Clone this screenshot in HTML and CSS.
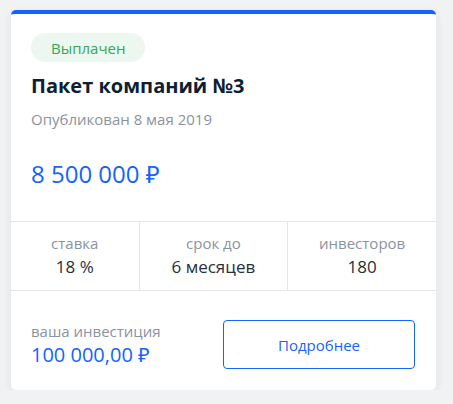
FILE: index.html
```html
<!DOCTYPE html>
<html lang="ru">
<head>
<meta charset="utf-8">
<link rel="stylesheet" href="styles.css">
</head>
<body>
<div class="card">
  <div class="card-top">
    <span class="badge">Выплачен</span>
    <h2 class="title">Пакет компаний №3</h2>
    <div class="date">Опубликован 8 мая 2019</div>
    <div class="amount">8 500 000 ₽</div>
  </div>
  <div class="stats">
    <div class="stat">
      <div class="stat-label">ставка</div>
      <div class="stat-value">18 %</div>
    </div>
    <div class="stat">
      <div class="stat-label">срок до</div>
      <div class="stat-value">6 месяцев</div>
    </div>
    <div class="stat">
      <div class="stat-label">инвесторов</div>
      <div class="stat-value">180</div>
    </div>
  </div>
  <div class="card-bottom">
    <div class="invest">
      <div class="invest-label">ваша инвестиция</div>
      <div class="invest-value">100 000,00 ₽</div>
    </div>
    <button class="more">Подробнее</button>
  </div>
</div>
</body>
</html>
```

FILE: styles.css
```css
* { box-sizing: border-box; }
html, body {
  margin: 0;
  padding: 0;
  background: #f1f2f4;
  font-family: "Open Sans", "Noto Sans", sans-serif;
}
body {
  padding: 10px 17px 0 11px;
}
.card {
  width: 425px;
  height: 380px;
  background: #fff;
  border-top: 4px solid #1463ff;
  border-radius: 5px;
  box-shadow: 0 3px 10px rgba(30, 40, 60, 0.08);
  display: flex;
  flex-direction: column;
}
.card-top {
  padding: 19px 20px 0 20px;
  height: 207px;
  display: flex;
  flex-direction: column;
  align-items: flex-start;
}
.badge {
  display: inline-flex;
  align-items: center;
  height: 29px;
  padding: 0 20px;
  border-radius: 15px;
  background: #ebf7ef;
  color: #35a85a;
  font-size: 15px;
}
.title {
  margin: 11px 0 0 0;
  font-size: 20px;
  line-height: 26px;
  font-weight: 700;
  color: #0e1e33;
}
.date {
  margin-top: 10px;
  font-size: 15px;
  line-height: 20px;
  color: #8a939f;
}
.amount {
  margin-top: 29px;
  font-size: 24px;
  line-height: 32px;
  color: #1463ff;
}
.stats {
  display: grid;
  grid-template-columns: 30% 35% 35%;
  border-top: 1px solid #e3e6ea;
  border-bottom: 1px solid #e3e6ea;
}
.stat {
  padding: 11px 0 11px;
  text-align: center;
  border-left: 1px solid #e3e6ea;
}
.stat:first-child { border-left: none; }
.stat-label {
  font-size: 15px;
  line-height: 20px;
  color: #8a939f;
}
.stat-value {
  margin-top: 2px;
  font-size: 17px;
  line-height: 24px;
  color: #26303d;
}
.card-bottom {
  flex: 1;
  display: flex;
  align-items: center;
  justify-content: space-between;
  padding: 8px 21px 0 20px;
}
.invest-label {
  font-size: 15px;
  line-height: 20px;
  color: #8a939f;
}
.invest-value {
  margin-top: 1px;
  font-size: 20px;
  line-height: 26px;
  color: #1463ff;
}
.more {
  width: 192px;
  height: 49px;
  border: 1px solid #1463ff;
  border-radius: 4px;
  background: #fff;
  color: #1463ff;
  font-family: "Open Sans", "Noto Sans", sans-serif;
  font-size: 15px;
  cursor: pointer;
}
```
